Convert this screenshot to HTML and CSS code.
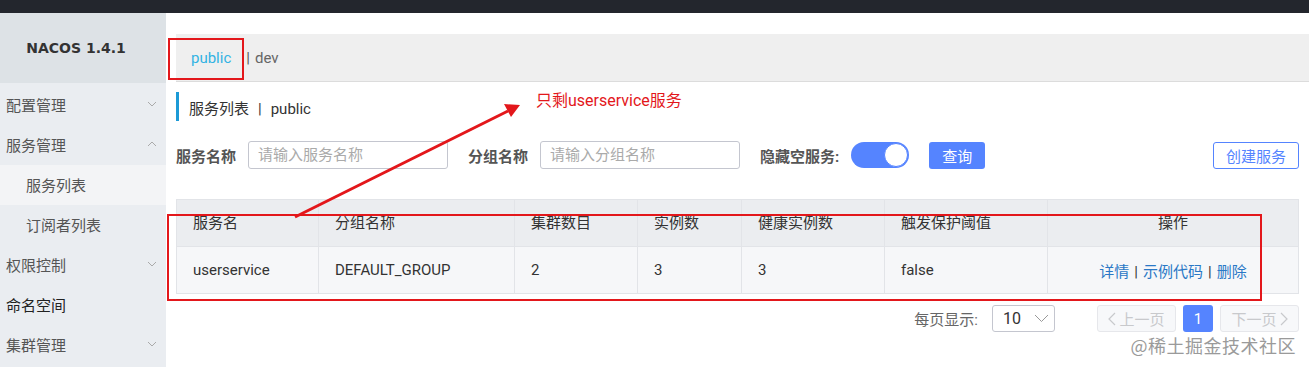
FILE: index.html
```html
<!DOCTYPE html>
<html lang="zh-CN">
<head>
    <meta charset="UTF-8">
    <title>Nacos - 服务列表</title>
    <link rel="stylesheet" href="styles.css">
</head>
<body>

<div class="topbar"></div>

<div class="layout">
    <!-- Sidebar -->
    <div class="sidebar">
        <div class="brand">NACOS 1.4.1</div>
        <ul class="menu">
            <li class="menu-item">配置管理
                <svg class="chev" width="10" height="6" viewBox="0 0 10 6"><path d="M1 1l4 4 4-4" fill="none" stroke="#aaa" stroke-width="1"/></svg>
            </li>
            <li class="menu-item">服务管理
                <svg class="chev" width="10" height="6" viewBox="0 0 10 6"><path d="M1 5l4-4 4 4" fill="none" stroke="#aaa" stroke-width="1"/></svg>
            </li>
            <li class="menu-item sub active">服务列表</li>
            <li class="menu-item sub">订阅者列表</li>
            <li class="menu-item">权限控制
                <svg class="chev" width="10" height="6" viewBox="0 0 10 6"><path d="M1 1l4 4 4-4" fill="none" stroke="#aaa" stroke-width="1"/></svg>
            </li>
            <li class="menu-item dark">命名空间</li>
            <li class="menu-item">集群管理
                <svg class="chev" width="10" height="6" viewBox="0 0 10 6"><path d="M1 1l4 4 4-4" fill="none" stroke="#aaa" stroke-width="1"/></svg>
            </li>
        </ul>
    </div>

    <!-- Main content -->
    <div class="main">
        <div class="ns-bar">
            <span class="ns-current">public</span>
            <span class="ns-sep">|</span>
            <span class="ns-other">dev</span>
        </div>

        <div class="page-title">服务列表<span class="title-sep">|</span>public</div>

        <div class="search-row">
            <label class="field-label">服务名称</label>
            <input class="field-input" type="text" placeholder="请输入服务名称">
            <label class="field-label gap">分组名称</label>
            <input class="field-input" type="text" placeholder="请输入分组名称">
            <label class="field-label gap">隐藏空服务:</label>
            <span class="switch"><span class="knob"></span></span>
            <button class="btn-primary">查询</button>
            <button class="btn-outline">创建服务</button>
        </div>

        <table class="service-table">
            <thead>
            <tr>
                <th class="c1">服务名</th>
                <th class="c2">分组名称</th>
                <th class="c3">集群数目</th>
                <th class="c4">实例数</th>
                <th class="c5">健康实例数</th>
                <th class="c6">触发保护阈值</th>
                <th class="c7 center">操作</th>
            </tr>
            </thead>
            <tbody>
            <tr>
                <td>userservice</td>
                <td>DEFAULT_GROUP</td>
                <td>2</td>
                <td>3</td>
                <td>3</td>
                <td>false</td>
                <td class="center ops"><a>详情</a><span class="sep">|</span><a>示例代码</a><span class="sep">|</span><a>删除</a></td>
            </tr>
            </tbody>
        </table>

        <div class="pager">
            <span class="page-size-label">每页显示:</span>
            <span class="page-size">10
                <svg width="15" height="9" viewBox="0 0 15 9"><path d="M1 1l6.5 6.5 6.5-6.5" fill="none" stroke="#999" stroke-width="1"/></svg>
            </span>
            <span class="page-btn disabled">
                <svg width="8" height="14" viewBox="0 0 8 14"><path d="M7 1L1 7l6 6" fill="none" stroke="#c8c9cc" stroke-width="1.2"/></svg>
                上一页
            </span>
            <span class="page-num">1</span>
            <span class="page-btn disabled">
                下一页
                <svg width="8" height="14" viewBox="0 0 8 14"><path d="M1 1l6 6-6 6" fill="none" stroke="#c8c9cc" stroke-width="1.2"/></svg>
            </span>
        </div>
    </div>
</div>

<div class="watermark">@稀土掘金技术社区</div>

<!-- Annotation overlay -->
<svg class="annot" width="1309" height="367" viewBox="0 0 1309 367">
    <rect x="169" y="39" width="74" height="40" fill="none" stroke="#e3171b" stroke-width="2"/>
    <rect x="168" y="215" width="1093" height="85" fill="none" stroke="#e3171b" stroke-width="2"/>
    <line x1="295" y1="217" x2="508" y2="111" stroke="#e3171b" stroke-width="3"/>
    <polygon points="520,105 511,117 504,104" fill="#e3171b"/>
</svg>
<div class="annot-text">只剩userservice服务</div>

</body>
</html>
```

FILE: styles.css
```css
/* Global */
body {
    margin: 0;
    width: 1309px;
    height: 367px;
    overflow: hidden;
    position: relative;
    font-family: Roboto, "Noto Sans CJK SC", sans-serif;
    font-size: 15px;
    color: #333;
    background: #fff;
}

.topbar {
    height: 13px;
    background: #23262d;
}

.layout {
    display: flex;
    height: 354px;
}

/* Sidebar */
.sidebar {
    width: 166px;
    flex-shrink: 0;
    background: #eaedf1;
}

.brand {
    height: 70px;
    line-height: 70px;
    text-align: center;
    background: #dde2e6;
    font-family: "DejaVu Sans", sans-serif;
    font-weight: bold;
    font-size: 14px;
    color: #333;
    padding-right: 14px;
}

.menu {
    list-style: none;
    margin: 2px 0 0;
    padding: 0;
}

.menu-item {
    height: 40px;
    line-height: 40px;
    padding-left: 6px;
    display: flex;
    align-items: center;
    justify-content: space-between;
    padding-right: 9px;
    padding-top: 1px;
    box-sizing: border-box;
    color: #555;
}

.menu-item.sub {
    padding-left: 26px;
}

.menu-item.active {
    background: #f3f4f6;
}

.menu-item.dark {
    color: #222;
}

.chev {
    margin-top: -4px;
}

/* Main */
.main {
    flex: 1;
    padding: 21px 10px 0;
}

.ns-bar {
    height: 47px;
    margin-right: -10px;
    background: #efefef;
    border-bottom: 1px solid #dcdcdc;
    display: flex;
    align-items: center;
    padding-left: 15px;
}

.ns-current {
    color: #33b3e3;
    margin-right: 15px;
}

.ns-sep {
    color: #555;
    margin-right: 5px;
}

.ns-other {
    color: #666;
}

.page-title {
    margin-top: 10px;
    height: 23px;
    line-height: 23px;
    padding-top: 6px;
    border-left: 3px solid #1c9ad6;
    padding-left: 10px;
    color: #333;
}

.title-sep {
    margin: 0 9px;
}

/* Search row */
.search-row {
    margin-top: 20px;
    height: 28px;
    display: flex;
    align-items: center;
}

.field-label {
    font-weight: bold;
    color: #555;
    margin-right: 12px;
}

.field-label.gap {
    margin-left: 20px;
}

.field-input {
    width: 200px;
    height: 28px;
    box-sizing: border-box;
    border: 1px solid #c4c6cf;
    border-radius: 3px;
    padding: 0 9px;
    font-family: inherit;
    font-size: 15px;
    color: #333;
}

.field-input::placeholder {
    color: #aaa;
}

.switch {
    width: 58px;
    height: 26px;
    border-radius: 13px;
    background: #5584ff;
    position: relative;
    box-sizing: border-box;
}

.knob {
    position: absolute;
    right: 1px;
    top: 1px;
    width: 24px;
    height: 24px;
    border-radius: 50%;
    background: #fff;
    box-sizing: border-box;
    border: 1px solid #5584ff;
}

.btn-primary {
    margin-left: 20px;
    width: 56px;
    height: 27px;
    border: none;
    border-radius: 3px;
    background: #5584ff;
    color: #fff;
    font-family: inherit;
    font-size: 15px;
}

.btn-outline {
    margin-left: auto;
    width: 86px;
    height: 27px;
    border: 1px solid #5584ff;
    border-radius: 3px;
    background: #fff;
    color: #5584ff;
    font-family: inherit;
    font-size: 15px;
}

/* Table */
.service-table {
    margin-top: 30px;
    width: 1123px;
    border-collapse: collapse;
    table-layout: fixed;
}

.service-table th,
.service-table td {
    height: 46px;
    padding: 0 0 0 16px;
    text-align: left;
    font-weight: normal;
    border: 1px solid #e2e4e8;
    color: #333;
}

.service-table th {
    background: #ebedf0;
    height: 42px;
    padding-bottom: 4px;
}

.service-table td {
    background: #f6f7f9;
}

.service-table .center {
    text-align: center;
    padding-left: 0;
}

.c1 { width: 125px; }
.c2 { width: 179px; }
.c3 { width: 106px; }
.c4 { width: 87px; }
.c5 { width: 126px; }
.c6 { width: 146px; }

.ops a {
    color: #2a78c6;
}

.ops .sep {
    margin: 0 5px;
}

/* Pagination */
.pager {
    margin-top: 11px;
    display: flex;
    align-items: center;
    justify-content: flex-end;
    height: 27px;
}

.page-size-label {
    color: #666;
    margin-right: 14px;
}

.page-size {
    width: 63px;
    height: 27px;
    box-sizing: border-box;
    border: 1px solid #c4c6cf;
    border-radius: 3px;
    display: flex;
    align-items: center;
    justify-content: space-between;
    padding: 0 5px 0 10px;
    margin-right: 42px;
    font-size: 16px;
}

.page-btn {
    width: 79px;
    height: 27px;
    box-sizing: border-box;
    border: 1px solid #e6e7eb;
    border-radius: 3px;
    background: #f7f8fa;
    color: #c8c9cc;
    display: flex;
    align-items: center;
    justify-content: center;
    gap: 3px;
}

.page-num {
    width: 30px;
    height: 27px;
    margin: 0 7px;
    border-radius: 3px;
    background: #5584ff;
    color: #fff;
    display: flex;
    align-items: center;
    justify-content: center;
}

.watermark {
    position: absolute;
    right: 13px;
    bottom: 9px;
    font-family: "Noto Sans CJK SC", sans-serif;
    font-size: 18px;
    letter-spacing: 0.5px;
    color: #9a9a9a;
}

/* Red annotations drawn over the screenshot */
.annot {
    position: absolute;
    top: 0;
    left: 0;
    pointer-events: none;
}

.annot-text {
    position: absolute;
    left: 536px;
    top: 87px;
    font-size: 16px;
    color: #e3171b;
}
```
